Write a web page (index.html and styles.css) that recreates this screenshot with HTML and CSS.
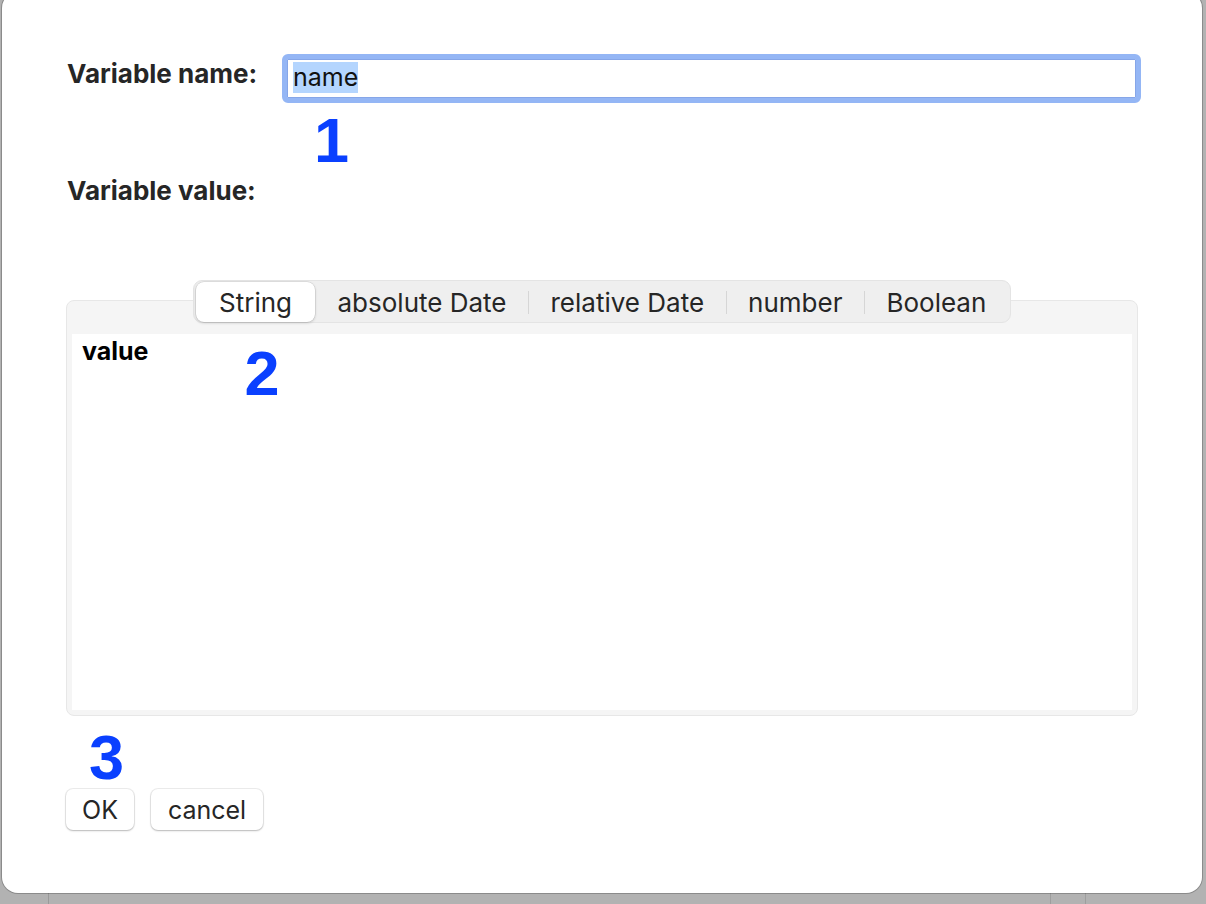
FILE: index.html
```html
<!DOCTYPE html>
<html lang="en">
<head>
<meta charset="utf-8">
<title>Variable</title>
<link rel="stylesheet" href="styles.css">
</head>
<body>
<div class="dialog">
  <div class="name-row">
    <label class="lbl lbl-name">Variable name:</label>
    <div class="input"><span class="sel">name</span></div>
  </div>
  <div class="anno anno-1">1</div>
  <div class="lbl lbl-value">Variable value:</div>
  <div class="tabs">
    <div class="seg">
      <div class="seg-item active">String</div>
      <span class="sep hidden"></span>
      <div class="seg-item">absolute Date</div>
      <span class="sep"></span>
      <div class="seg-item">relative Date</div>
      <span class="sep"></span>
      <div class="seg-item">number</div>
      <span class="sep"></span>
      <div class="seg-item">Boolean</div>
    </div>
    <div class="panel">
      <div class="panel-body">
        <span class="value-lbl">value</span>
        <span class="anno anno-2">2</span>
      </div>
    </div>
  </div>
  <div class="anno anno-3">3</div>
  <div class="buttons">
    <button class="btn btn-ok">OK</button>
    <button class="btn btn-cancel">cancel</button>
  </div>
</div>
</body>
</html>
```
FILE: styles.css
```css
html, body {
  margin: 0;
  padding: 0;
}
body {
  width: 1206px;
  height: 904px;
  overflow: hidden;
  background-color: #b2b2b2;
  background-image:
    linear-gradient(to right, transparent 48px, #9a9a9a 48px, #9a9a9a 49px, transparent 49px),
    linear-gradient(to right, transparent 1050px, #9e9e9e 1050px, #9e9e9e 1051px, transparent 1051px),
    linear-gradient(to right, transparent 1085px, #9e9e9e 1085px, #9e9e9e 1086px, transparent 1086px);
  font-family: "Inter", "Liberation Sans", sans-serif;
  color: #262626;
}
.dialog {
  box-sizing: border-box;
  width: 1200px;
  height: 901px;
  margin: -8px 0 0 2px;
  padding: 62px 64px 0 64px;
  background: #ffffff;
  border-radius: 16px;
  box-shadow: 0 0 0 1px rgba(0, 0, 0, 0.22);
  display: flex;
  flex-direction: column;
  align-items: flex-start;
}
.name-row {
  display: flex;
  align-items: flex-start;
  height: 49px;
}
.lbl {
  font-size: 26px;
  line-height: 30px;
  font-weight: 700;
  color: #262626;
  padding-left: 1px;
}
.lbl-name {
  margin-top: 5px;
  width: 215px;
}
.input {
  box-sizing: border-box;
  width: 859px;
  height: 49px;
  border: 5px solid #94b6f5;
  border-radius: 6px;
  box-shadow: inset 0 0 0 1px #86a6e8;
  padding: 3px 0 0 6px;
  display: flex;
  align-items: flex-start;
}
.sel {
  background: #b4d5fe;
  color: #111;
  font-size: 25px;
  line-height: 31px;
  font-weight: 400;
}
.anno {
  font-family: "Liberation Sans", Arial, sans-serif;
  font-weight: 700;
  font-size: 63px;
  line-height: 63px;
  color: #0a40ff;
}
.anno-1 {
  margin: 6px 0 0 248px;
}
.lbl-value {
  margin-top: 4px;
}
.tabs {
  margin-top: 74px;
  width: 1072px;
  display: flex;
  flex-direction: column;
}
.seg {
  position: relative;
  z-index: 1;
  align-self: flex-start;
  margin-left: 127px;
  box-sizing: border-box;
  height: 43px;
  padding: 1px 2px 0 2px;
  background: #efefef;
  border: 1px solid #e4e4e4;
  border-radius: 9px;
  display: flex;
  align-items: center;
}
.seg-item {
  box-sizing: border-box;
  height: 40px;
  padding: 0 21.5px;
  display: flex;
  align-items: center;
  font-size: 26px;
  color: #262626;
  border-radius: 8px;
}
.seg-item.active {
  background: #ffffff;
  padding: 0 23px;
  box-shadow: 0 0 0 0.5px rgba(0, 0, 0, 0.12), 0 1px 3px rgba(0, 0, 0, 0.18);
}
.sep {
  width: 1px;
  height: 23px;
  background: #d6d6d6;
}
.sep.hidden {
  background: transparent;
}
.panel {
  margin-top: -23px;
  box-sizing: border-box;
  height: 416px;
  padding: 33px 5px 5px 5px;
  background: #f5f5f5;
  border: 1px solid #e7e7e7;
  border-radius: 8px;
  display: flex;
}
.panel-body {
  flex: 1;
  background: #ffffff;
  display: flex;
  align-items: flex-start;
  padding: 2px 0 0 10px;
}
.value-lbl {
  font-size: 25px;
  line-height: 30px;
  font-weight: 700;
  color: #000;
}
.anno-2 {
  margin: 6px 0 0 96px;
}
.anno-3 {
  margin: 10px 0 0 23px;
}
.buttons {
  display: flex;
  gap: 17px;
}
.btn {
  box-sizing: border-box;
  height: 41px;
  padding: 0 16px;
  background: #ffffff;
  border: none;
  border-radius: 7px;
  box-shadow: 0 0 0 1px rgba(0, 0, 0, 0.07), 0 1px 2px rgba(0, 0, 0, 0.22);
  font-family: "Inter", "Liberation Sans", sans-serif;
  font-size: 25px;
  color: #262626;
}
.btn-ok {
  width: 68px;
}
.btn-cancel {
  width: 112px;
}
```
